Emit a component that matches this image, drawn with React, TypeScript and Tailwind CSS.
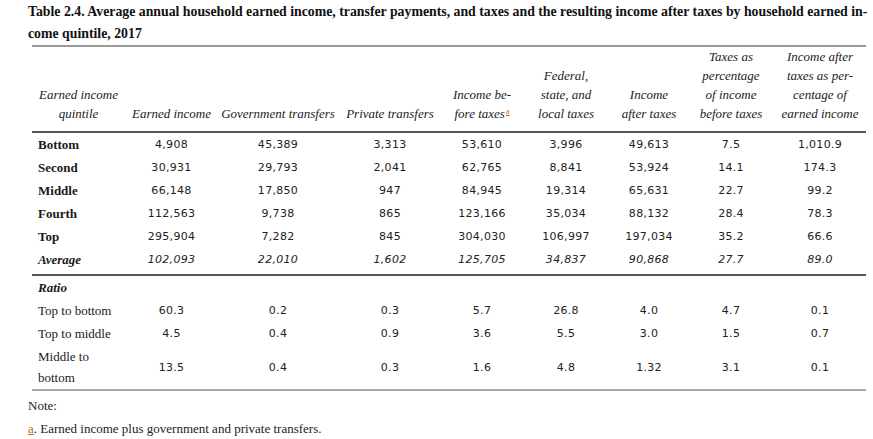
const serif = { fontFamily: '"Liberation Serif", "DejaVu Serif", serif' }
const sans = { fontFamily: '"DejaVu Sans", "Liberation Sans", sans-serif' }

const rows = [
  ['Bottom', '4,908', '45,389', '3,313', '53,610', '3,996', '49,613', '7.5', '1,010.9'],
  ['Second', '30,931', '29,793', '2,041', '62,765', '8,841', '53,924', '14.1', '174.3'],
  ['Middle', '66,148', '17,850', '947', '84,945', '19,314', '65,631', '22.7', '99.2'],
  ['Fourth', '112,563', '9,738', '865', '123,166', '35,034', '88,132', '28.4', '78.3'],
  ['Top', '295,904', '7,282', '845', '304,030', '106,997', '197,034', '35.2', '66.6'],
]

const average = ['Average', '102,093', '22,010', '1,602', '125,705', '34,837', '90,868', '27.7', '89.0']

const ratios = [
  ['Top to bottom', '60.3', '0.2', '0.3', '5.7', '26.8', '4.0', '4.7', '0.1'],
  ['Top to middle', '4.5', '0.4', '0.9', '3.6', '5.5', '3.0', '1.5', '0.7'],
]

const widths = ['w-[93px]', 'w-[93px]', 'w-[120px]', 'w-[104px]', 'w-[80px]', 'w-[88px]', 'w-[78px]', 'w-[86px]', 'w-[92px]']

function Num({ v, italic }: { v: string; italic?: boolean }) {
  return (
    <td className={`text-center text-[11px] leading-[21px] py-px text-[#222] tracking-[0.3px] ${italic ? 'italic' : ''}`} style={sans}>
      {v}
    </td>
  )
}

export default function App() {
  return (
    <div className="bg-white w-[873px] h-[439px] overflow-hidden text-[#1a1a1a]" style={serif}>
      <div className="pl-[28px] pt-px text-[13.8px] leading-[22px] font-bold whitespace-nowrap text-[#111]">
        <div>Table 2.4. Average annual household earned income, transfer payments, and taxes and the resulting income after taxes by household earned in-</div>
        <div>come quintile, 2017</div>
      </div>

      <table className="ml-[32px] w-[834px] table-fixed border-collapse">
        <colgroup>
          {widths.map((w, i) => <col key={i} className={w} />)}
        </colgroup>
        <thead>
          <tr className="border-t-[2px] border-t-[#999] border-b-[2px] border-b-[#555]">
            {[
              ['Earned income', 'quintile'],
              ['Earned income'],
              ['Government transfers'],
              ['Private transfers'],
              ['Income be-', 'fore taxes'],
              ['Federal,', 'state, and', 'local taxes'],
              ['Income', 'after taxes'],
              ['Taxes as', 'percentage', 'of income', 'before taxes'],
              ['Income after', 'taxes as per-', 'centage of', 'earned income'],
            ].map((lines, i) => (
              <th key={i} className="align-bottom font-normal italic text-[13px] leading-[19px] text-center pt-0 pb-[8px] whitespace-nowrap text-[#222]">
                {lines.map((l, j) => (
                  <div key={j}>
                    {l}
                    {i === 4 && j === 1 && (
                      <sup className="not-italic text-[8px] text-[#d2691e] underline ml-px">a</sup>
                    )}
                  </div>
                ))}
              </th>
            ))}
          </tr>
        </thead>
        <tbody className="border-b-[2px] border-b-[#555]">
          {rows.map((r) => (
            <tr key={r[0]}>
              <td className="pl-[6px] text-[13px] leading-[21px] py-px font-bold">{r[0]}</td>
              {r.slice(1).map((v, i) => <Num key={i} v={v} />)}
            </tr>
          ))}
          <tr>
            <td className="pl-[6px] text-[13px] leading-[21px] py-px font-bold italic">{average[0]}</td>
            {average.slice(1).map((v, i) => <Num key={i} v={v} italic />)}
          </tr>
          <tr className="h-[4px]"><td colSpan={9} /></tr>
        </tbody>
        <tbody className="border-b-[2px] border-b-[#aaa]">
          <tr>
            <td colSpan={9} className="pl-[6px] text-[13px] leading-[21px] py-px font-bold italic">Ratio</td>
          </tr>
          {ratios.map((r) => (
            <tr key={r[0]}>
              <td className="pl-[6px] text-[13px] leading-[21px] py-px whitespace-nowrap">{r[0]}</td>
              {r.slice(1).map((v, i) => <Num key={i} v={v} />)}
            </tr>
          ))}
          <tr>
            <td className="pl-[6px] text-[13px] leading-[21px] py-px">
              <div>Middle to</div>
              <div>bottom</div>
            </td>
            {['13.5', '0.4', '0.3', '1.6', '4.8', '1.32', '3.1', '0.1'].map((v, i) => <Num key={i} v={v} />)}
          </tr>
        </tbody>
      </table>

      <div className="pl-[28px] pt-[3px] text-[13px] leading-[23px] text-[#222]">
        <div>Note:</div>
        <div>
          <span className="text-[#c0682a] underline">a</span>. Earned income plus government and private transfers.
        </div>
      </div>
    </div>
  )
}
